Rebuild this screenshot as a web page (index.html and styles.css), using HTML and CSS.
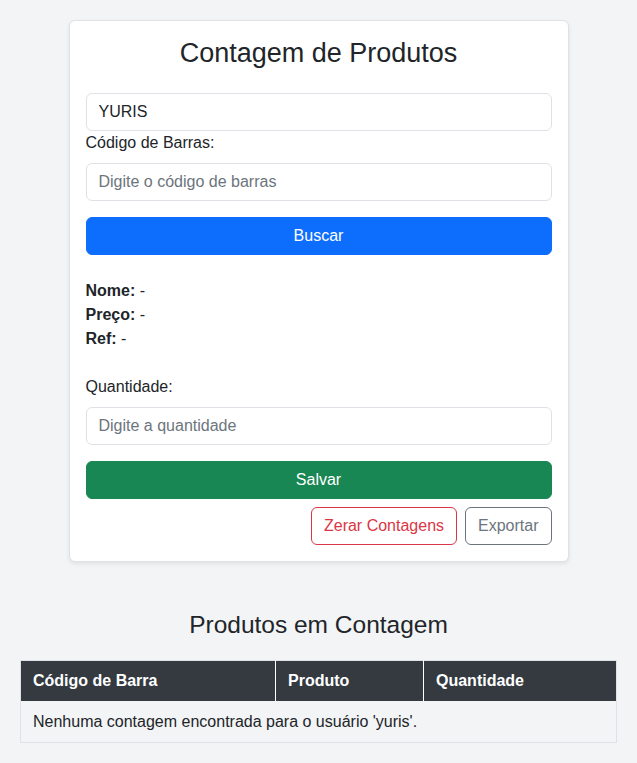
FILE: index.html
```html
<!DOCTYPE html>
<html lang="pt-BR">
<head>
    <meta charset="UTF-8">
    <meta name="viewport" content="width=device-width, initial-scale=1.0">
    <title>Contagem de Produtos</title>
    <link rel="stylesheet" href="styles.css">
</head>
<body>
    <div class="container">
        <div class="card">
            <h1 class="card-title">Contagem de Produtos</h1>
            <input type="text" class="form-control" value="YURIS">
            <label class="form-label">Código de Barras:</label>
            <input type="text" class="form-control" placeholder="Digite o código de barras">
            <button class="btn btn-primary">Buscar</button>

            <div class="product-info">
                <div><strong>Nome:</strong> -</div>
                <div><strong>Preço:</strong> -</div>
                <div><strong>Ref:</strong> -</div>
            </div>

            <label class="form-label">Quantidade:</label>
            <input type="number" class="form-control" placeholder="Digite a quantidade">
            <button class="btn btn-success">Salvar</button>

            <div class="actions">
                <button class="btn btn-outline-danger">Zerar Contagens</button>
                <button class="btn btn-outline-secondary">Exportar</button>
            </div>
        </div>

        <h2 class="section-title">Produtos em Contagem</h2>
        <table class="table">
            <thead>
                <tr>
                    <th class="col-code">Código de Barra</th>
                    <th class="col-name">Produto</th>
                    <th>Quantidade</th>
                </tr>
            </thead>
            <tbody>
                <tr>
                    <td colspan="3">Nenhuma contagem encontrada para o usuário 'yuris'.</td>
                </tr>
            </tbody>
        </table>
    </div>
</body>
</html>
```

FILE: styles.css
```css
* {
    box-sizing: border-box;
}

body {
    margin: 0;
    background-color: #f3f4f6;
    color: #212529;
    font-family: "Liberation Sans", Arial, sans-serif;
    font-size: 16px;
    line-height: 1.5;
}

.container {
    padding: 20px 20px;
}

.card {
    width: 500px;
    margin: 0 auto;
    background: #ffffff;
    border: 1px solid #dfe1e4;
    border-radius: 6px;
    padding: 16px;
    box-shadow: 0 2px 4px rgba(0, 0, 0, 0.08);
}

.card-title {
    margin: 0 0 23px;
    font-size: 27px;
    font-weight: 400;
    line-height: 1.24;
    text-align: center;
}

.form-control {
    display: block;
    width: 100%;
    height: 38px;
    padding: 6px 12px;
    font-family: inherit;
    font-size: 16px;
    color: #212529;
    background: #ffffff;
    border: 1px solid #dee2e6;
    border-radius: 6px;
}

.form-control::placeholder {
    color: #6c757d;
}

.form-label {
    display: block;
    margin: 0 0 8px;
}

.btn {
    display: inline-block;
    height: 38px;
    padding: 6px 12px;
    font-family: inherit;
    font-size: 16px;
    line-height: 1.5;
    border: 1px solid transparent;
    border-radius: 6px;
    background: transparent;
}

.btn-primary,
.btn-success {
    display: block;
    width: 100%;
    margin-top: 16px;
    color: #ffffff;
}

.btn-primary {
    background: #0d6efd;
    border-color: #0d6efd;
}

.btn-success {
    background: #198754;
    border-color: #198754;
}

.product-info {
    margin: 24px 0 24px;
}

.actions {
    display: flex;
    justify-content: flex-end;
    gap: 8px;
    margin-top: 8px;
}

.btn-outline-danger {
    color: #dc3545;
    border-color: #dc3545;
}

.btn-outline-secondary {
    color: #6c757d;
    border-color: #6c757d;
}

.section-title {
    margin: 48px 0 20px;
    font-size: 24.5px;
    font-weight: 400;
    line-height: 1.2;
    text-align: center;
}

.table {
    width: 100%;
    border-collapse: collapse;
    border: 1px solid #dee2e6;
}

.table th {
    background: #343a40;
    color: #ffffff;
    text-align: left;
    font-weight: 700;
    height: 41px;
    padding: 8px 12px;
    border-left: 1px solid #ffffff;
}

.table th:first-child {
    border-left: none;
}

.col-code {
    width: 255px;
}

.col-name {
    width: 148px;
}

.table td {
    padding: 8px 12px;
    height: 41px;
}
```
